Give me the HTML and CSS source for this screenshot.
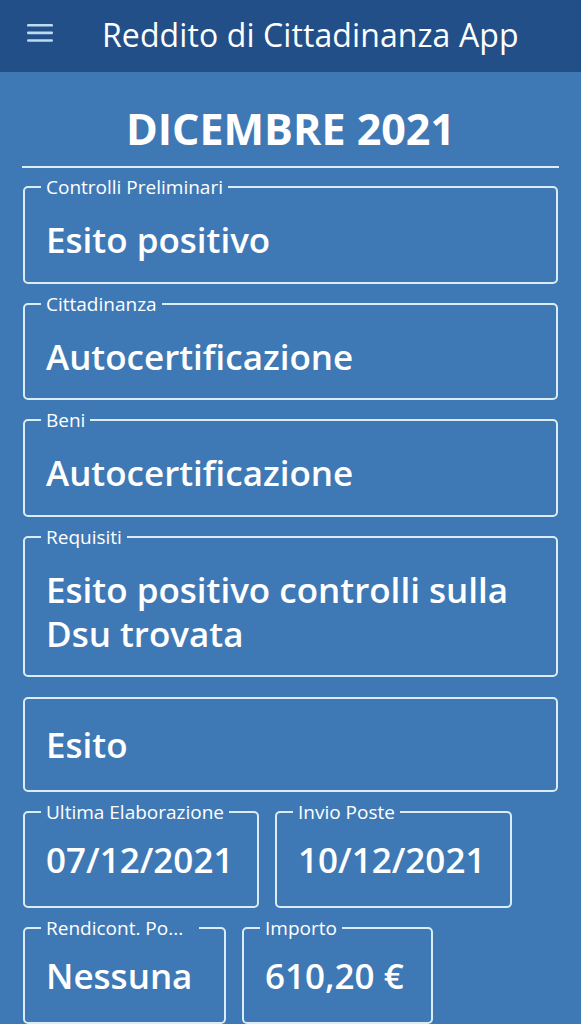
FILE: index.html
```html
<!DOCTYPE html>
<html lang="it">
<head>
  <meta charset="UTF-8">
  <title>Reddito di Cittadinanza App</title>
  <link rel="stylesheet" href="styles.css">
</head>
<body>

<header class="appbar">
  <svg class="menu" width="26" height="20" viewBox="0 0 26 20">
    <rect x="0" y="1" width="26" height="2.6" rx="1.2"/>
    <rect x="0" y="8.6" width="26" height="2.6" rx="1.2"/>
    <rect x="0" y="16.2" width="26" height="2.6" rx="1.2"/>
  </svg>
  <h1>Reddito di Cittadinanza App</h1>
</header>

<main class="content">
  <h2 class="month">DICEMBRE 2021</h2>
  <hr class="divider">

  <div class="fields">
    <fieldset class="field">
      <legend>Controlli Preliminari</legend>
      <p class="value">Esito positivo</p>
    </fieldset>

    <fieldset class="field">
      <legend>Cittadinanza</legend>
      <p class="value">Autocertificazione</p>
    </fieldset>

    <fieldset class="field">
      <legend>Beni</legend>
      <p class="value">Autocertificazione</p>
    </fieldset>

    <fieldset class="field">
      <legend>Requisiti</legend>
      <p class="value">Esito positivo controlli sulla Dsu trovata</p>
    </fieldset>

    <fieldset class="field nolabel">
      <p class="value">Esito</p>
    </fieldset>

    <div class="row">
      <fieldset class="field small w-elab">
        <legend>Ultima Elaborazione</legend>
        <p class="value">07/12/2021</p>
      </fieldset>
      <fieldset class="field small w-poste">
        <legend>Invio Poste</legend>
        <p class="value">10/12/2021</p>
      </fieldset>
    </div>

    <div class="row">
      <fieldset class="field small w-rend">
        <legend class="cut">Rendicont. Po...</legend>
        <p class="value">Nessuna</p>
      </fieldset>
      <fieldset class="field small w-importo">
        <legend>Importo</legend>
        <p class="value">610,20 €</p>
      </fieldset>
    </div>
  </div>
</main>

</body>
</html>
```

FILE: styles.css
```css
body {
  margin: 0;
  font-family: "Open Sans", Lato, sans-serif;
  background: #3f79b5;
  color: #fff;
  overflow: hidden;
}
.appbar {
  height: 72px;
  background: #224f88;
  display: flex;
  align-items: center;
  padding: 0 27px;
  gap: 49px;
}
.menu {
  fill: #bcdcf6;
  margin-top: -6px;
}
.appbar h1 {
  margin: 0;
  margin-top: -4px;
  font-size: 32px;
  font-weight: normal;
  letter-spacing: 0.1px;
}
.content {
  padding: 0 23px;
}
.month {
  margin: 33px 0 13px;
  font-size: 43px;
  line-height: 48px;
  font-weight: bold;
  text-align: center;
}
.divider {
  margin: 0 -1px 9px;
  border: none;
  height: 2px;
  background: #dcedf9;
}
.fields {
  display: flex;
  flex-direction: column;
  gap: 10px;
}
.field {
  box-sizing: border-box;
  margin: 0;
  padding: 0 21px;
  border: 2px solid #d9ecf8;
  border-radius: 5px;
  min-width: 0;
}
.field legend {
  margin-left: -5px;
  padding: 0 5px;
  font-size: 19px;
  line-height: 20px;
  white-space: nowrap;
}
.field legend.cut {
  padding-right: 16px;
}
.value {
  margin: 0;
  padding: 21px 0 19.5px;
  font-size: 35px;
  line-height: 44px;
  font-weight: 600;
}
.nolabel {
  margin-top: 10px;
}
.nolabel .value {
  padding: 24px 0 23px;
}
.row {
  display: flex;
  gap: 16px;
}
.small {
  padding-right: 12px;
}
.small .value {
  padding: 16px 0 24px;
}
.w-elab { width: 236px; }
.w-poste { width: 237px; }
.w-rend { width: 203px; }
.w-importo { width: 191px; }
```
